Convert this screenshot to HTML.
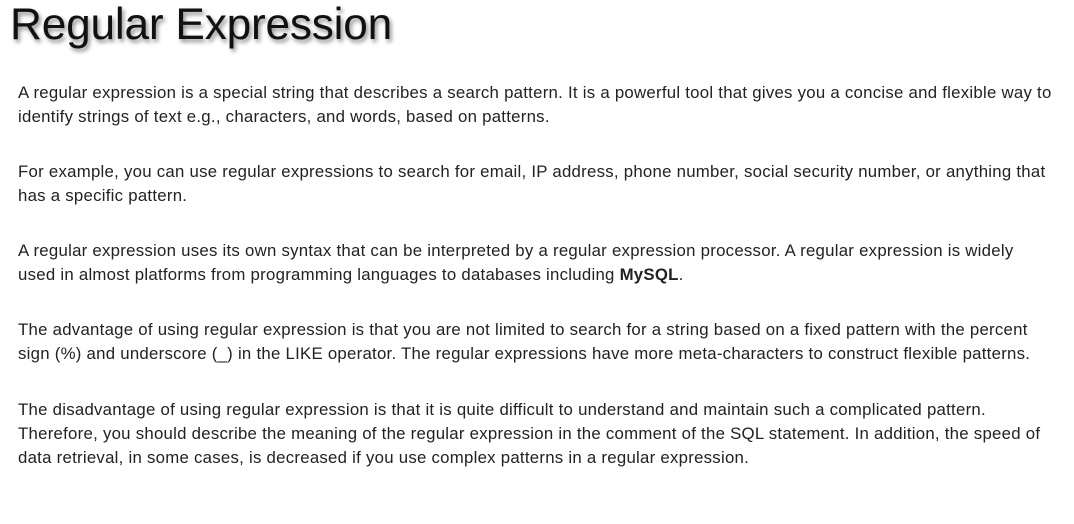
<!DOCTYPE html>
<html><head><style>
body{margin:0;width:1074px;height:524px;background:#fff;font-family:"Liberation Sans",Arial,sans-serif;color:#222;overflow:hidden}
h1{position:absolute;left:10px;top:0px;margin:0;font-weight:normal;font-size:44.2px;color:#111;text-shadow:2px 3px 4px rgba(0,0,0,.45);letter-spacing:-0.2px}
p{position:absolute;left:18px;margin:0;font-size:16.8px;letter-spacing:0.26px;line-height:24px;width:1060px;white-space:nowrap}
</style></head><body>
<h1>Regular Expression</h1>
<p style="top:81px">A regular expression is a special string that describes a search pattern. It is a powerful tool that gives you a concise and flexible way to<br>identify strings of text e.g., characters, and words, based on patterns.</p>
<p style="top:160px">For example, you can use regular expressions to search for email, IP address, phone number, social security number, or anything that<br>has a specific pattern.</p>
<p style="top:239px">A regular expression uses its own syntax that can be interpreted by a regular expression processor. A regular expression is widely<br>used in almost platforms from programming languages to databases including <b>MySQL</b>.</p>
<p style="top:318px">The advantage of using regular expression is that you are not limited to search for a string based on a fixed pattern with the percent<br>sign (%) and underscore (_) in the LIKE operator. The regular expressions have more meta-characters to construct flexible patterns.</p>
<p style="top:398px">The disadvantage of using regular expression is that it is quite difficult to understand and maintain such a complicated pattern.<br>Therefore, you should describe the meaning of the regular expression in the comment of the SQL statement. In addition, the speed of<br>data retrieval, in some cases, is decreased if you use complex patterns in a regular expression.</p>
</body></html>
